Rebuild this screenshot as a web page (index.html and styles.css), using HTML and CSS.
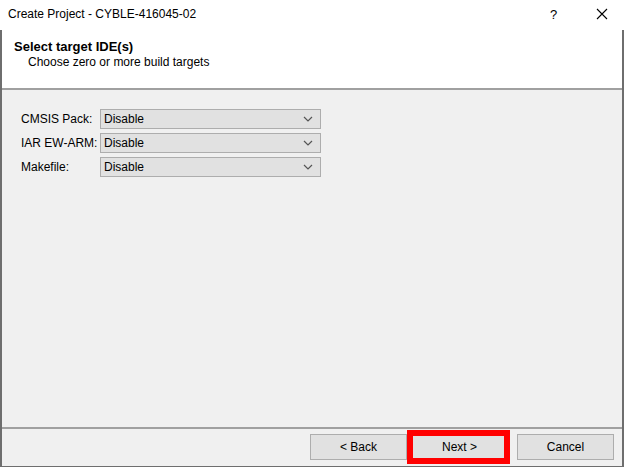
FILE: index.html
```html
<!DOCTYPE html>
<html>
<head>
  <meta charset="UTF-8">
  <title>Create Project</title>
  <link rel="stylesheet" href="styles.css">
</head>
<body>
  <div class="window">
    <div class="titlebar">
      <span class="title">Create Project - CYBLE-416045-02</span>
      <span class="help">?</span>
      <span class="close">
        <svg width="12" height="12" viewBox="0 0 12 12"><path d="M1 1L11 11M11 1L1 11" stroke="#000" stroke-width="1.1" fill="none"/></svg>
      </span>
    </div>
    <div class="frame">
      <div class="header">
        <div class="heading">Select target IDE(s)</div>
        <div class="subheading">Choose zero or more build targets</div>
      </div>
      <div class="content">
        <div class="row">
          <span class="label">CMSIS Pack:</span>
          <div class="combo"><span>Disable</span><svg class="arrow" width="10" height="6" viewBox="0 0 10 6"><path d="M1 1L5 5L9 1" stroke="#555" stroke-width="1.2" fill="none"/></svg></div>
        </div>
        <div class="row">
          <span class="label">IAR EW-ARM:</span>
          <div class="combo"><span>Disable</span><svg class="arrow" width="10" height="6" viewBox="0 0 10 6"><path d="M1 1L5 5L9 1" stroke="#555" stroke-width="1.2" fill="none"/></svg></div>
        </div>
        <div class="row">
          <span class="label">Makefile:</span>
          <div class="combo"><span>Disable</span><svg class="arrow" width="10" height="6" viewBox="0 0 10 6"><path d="M1 1L5 5L9 1" stroke="#555" stroke-width="1.2" fill="none"/></svg></div>
        </div>
      </div>
      <div class="footer">
        <button class="btn">&lt; Back</button>
        <button class="btn next">Next &gt;</button>
        <button class="btn cancel">Cancel</button>
        <div class="highlight"></div>
      </div>
    </div>
  </div>
</body>
</html>
```

FILE: styles.css
```css
html, body {
  margin: 0;
  padding: 0;
}
body {
  width: 624px;
  height: 467px;
  overflow: hidden;
  background: #fff;
  font-family: "Liberation Sans", Arial, sans-serif;
  font-size: 12px;
  color: #000;
}
.window {
  display: flex;
  flex-direction: column;
  height: 467px;
}
.titlebar {
  height: 30px;
  display: flex;
  align-items: center;
  background: #fff;
}
.title {
  margin-left: 8px;
  flex: 1;
  padding-bottom: 2px;
}
.help {
  width: 20px;
  font-size: 13px;
  margin-right: 10px;
  padding-bottom: 2px;
}
.close {
  width: 44px;
  display: flex;
  justify-content: center;
  padding-bottom: 2px;
}
.frame {
  flex: 1;
  display: flex;
  flex-direction: column;
  border-left: 2px solid #6e6e6e;
  border-right: 2px solid #6e6e6e;
  border-bottom: 1px solid #6e6e6e;
}
.header {
  height: 60px;
  background: #fff;
  border-bottom: 2px solid #a0a0a0;
  padding-left: 12px;
  box-sizing: border-box;
  padding-top: 9px;
}
.heading {
  font-weight: bold;
  font-size: 13px;
  line-height: 16px;
}
.subheading {
  padding-left: 14px;
  line-height: 14px;
}
.content {
  flex: 1;
  background: #f0f0f0;
  padding: 19px 0 0 19px;
  display: flex;
  flex-direction: column;
  gap: 4px;
}
.row {
  display: flex;
  align-items: center;
  height: 20px;
}
.label {
  width: 79px;
}
.combo {
  width: 221px;
  height: 20px;
  box-sizing: border-box;
  border: 1px solid #adadad;
  background: #e1e1e1;
  display: flex;
  align-items: center;
  padding-left: 3px;
  padding-right: 7px;
}
.combo span {
  flex: 1;
}
.footer {
  position: relative;
  height: 39px;
  background: #f0f0f0;
  border-top: 2px solid #a0a0a0;
  display: flex;
  align-items: flex-start;
  padding-top: 5px;
  padding-left: 308px;
  box-sizing: border-box;
}
.btn {
  width: 97px;
  height: 26px;
  border: 1px solid #adadad;
  background: #e1e1e1;
  font-family: inherit;
  font-size: 12px;
  color: #000;
  padding: 0;
}
.next {
  margin-left: 4px;
}
.cancel {
  margin-left: 9px;
}
.highlight {
  position: absolute;
  left: 405px;
  top: 1px;
  width: 91px;
  height: 22px;
  border: 6px solid #ff0000;
}
```
